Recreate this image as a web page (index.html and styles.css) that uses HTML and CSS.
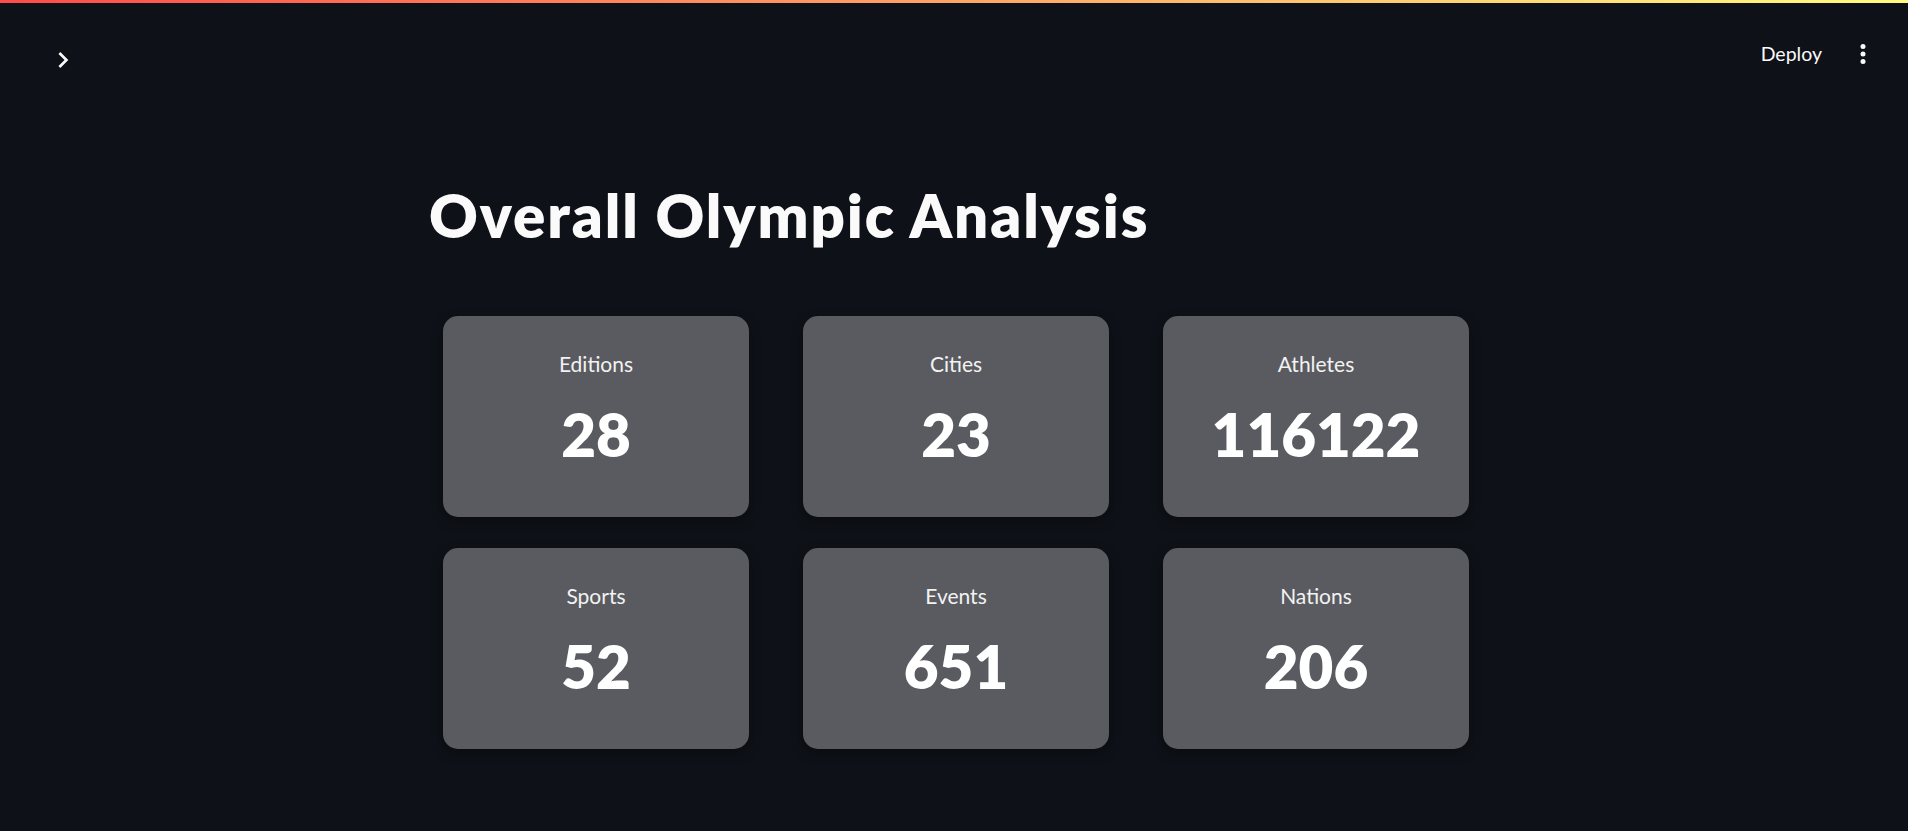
FILE: index.html
```html
<!DOCTYPE html>
<html lang="en">
<head>
<meta charset="utf-8">
<title>Overall Olympic Analysis</title>
<link rel="stylesheet" href="styles.css">
</head>
<body>
<div class="decoration"></div>
<header class="header">
  <button class="icon-btn chevron" aria-label="Expand sidebar">
    <svg width="32" height="32" viewBox="0 0 24 24"><path d="M10 6L8.59 7.41 13.17 12l-4.58 4.59L10 18l6-6z" fill="#fafafa"/></svg>
  </button>
  <div class="toolbar">
    <span class="deploy">Deploy</span>
    <button class="icon-btn kebab" aria-label="Main menu">
      <svg width="30" height="30" viewBox="0 0 24 24"><circle cx="12" cy="6" r="2" fill="#fafafa"/><circle cx="12" cy="12" r="2" fill="#fafafa"/><circle cx="12" cy="18" r="2" fill="#fafafa"/></svg>
    </button>
  </div>
</header>
<main class="main">
  <h1 class="title">Overall Olympic Analysis</h1>
  <section class="grid">
    <div class="card"><div class="label">Editions</div><div class="value">28</div></div>
    <div class="card"><div class="label">Cities</div><div class="value">23</div></div>
    <div class="card"><div class="label">Athletes</div><div class="value">116122</div></div>
    <div class="card"><div class="label">Sports</div><div class="value">52</div></div>
    <div class="card"><div class="label">Events</div><div class="value">651</div></div>
    <div class="card"><div class="label">Nations</div><div class="value">206</div></div>
  </section>
</main>
</body>
</html>
```

FILE: styles.css
```css
* { box-sizing: border-box; }
html, body {
  margin: 0;
  padding: 0;
  background: #0e1117;
  color: #fafafa;
  font-family: "Source Sans Pro", Lato, "Noto Sans", sans-serif;
  height: 100%;
  overflow: hidden;
}
.decoration {
  height: 3px;
  background: linear-gradient(90deg, #ff4b4b, #fffd80);
}
.header {
  display: flex;
  justify-content: space-between;
  align-items: flex-start;
  height: 90px;
  padding: 0 30px 0 47px;
}
.icon-btn {
  background: none;
  border: none;
  padding: 0;
  margin: 0;
  display: block;
  line-height: 0;
  cursor: pointer;
}
.icon-btn svg { display: block; }
.chevron { margin-top: 41px; }
.toolbar {
  display: flex;
  align-items: flex-start;
  gap: 26px;
}
.deploy {
  margin-top: 39px;
  font-size: 19.5px;
  line-height: 1.2;
  color: #fafafa;
}
.kebab { margin-top: 36px; }
.main {
  width: 1056px;
  margin: 0 auto;
  padding-top: 86px;
}
.title {
  margin: 0;
  font-size: 60px;
  line-height: 1.2;
  font-weight: 800;
  letter-spacing: 1.9px;
  padding-left: 3px;
  color: #fafafa;
}
.grid {
  margin-top: 65px;
  display: grid;
  grid-template-columns: repeat(3, 306px);
  column-gap: 54px;
  row-gap: 31px;
  padding-left: 17px;
}
.card {
  height: 201px;
  background: #5a5b60;
  border-radius: 15px;
  box-shadow: 0 4px 12px rgba(0, 0, 0, 0.35);
  display: flex;
  flex-direction: column;
  align-items: center;
  padding-top: 35px;
}
.label {
  font-size: 21px;
  line-height: 1.2;
  color: #f2f2f2;
}
.value {
  margin-top: 22px;
  font-size: 60px;
  line-height: 1.2;
  font-weight: 800;
  color: #ffffff;
}
```
